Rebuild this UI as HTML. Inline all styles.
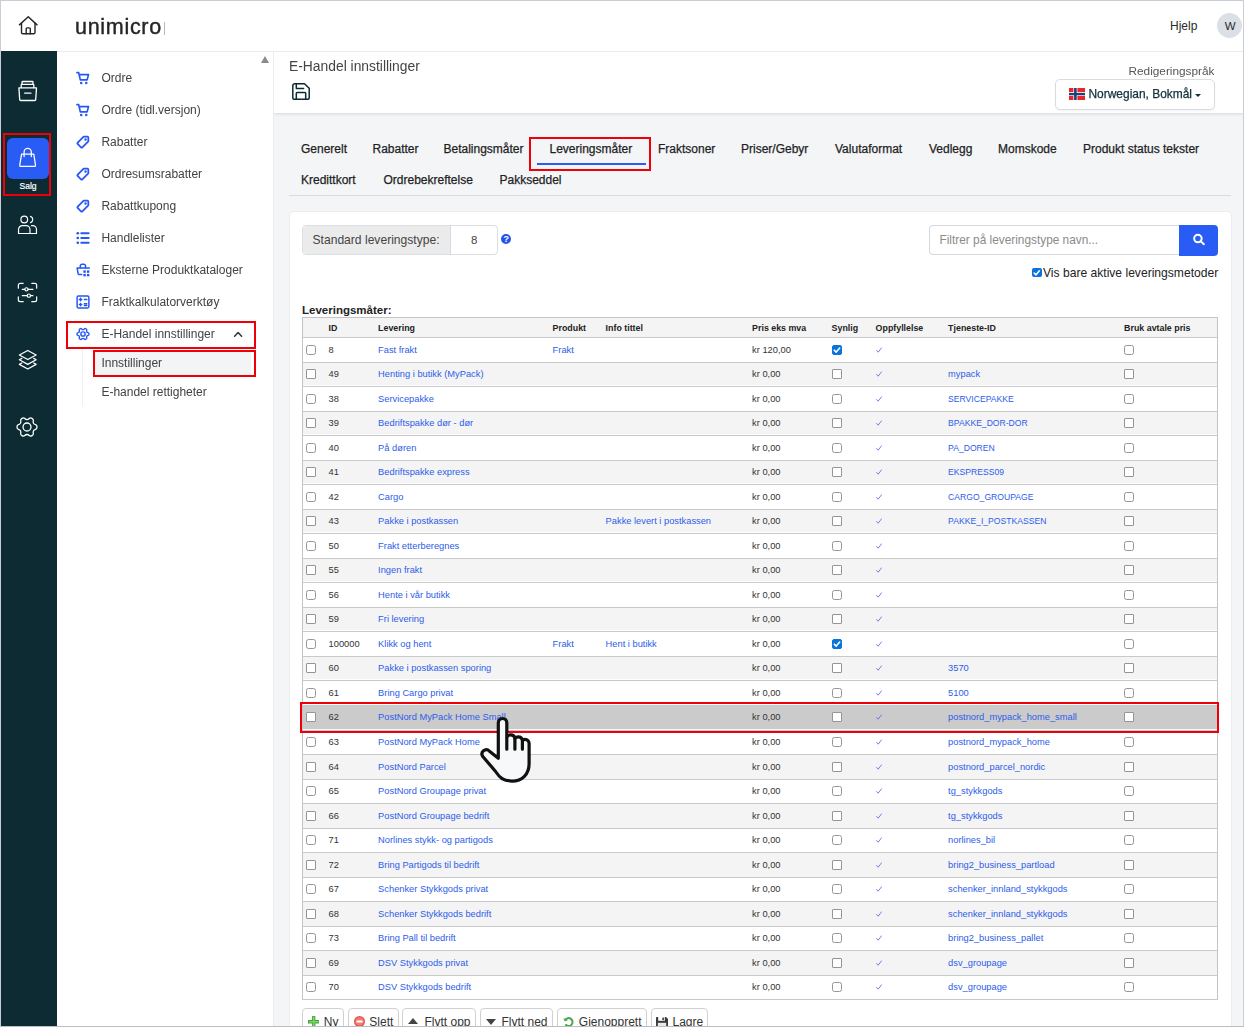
<!DOCTYPE html>
<html lang="no">
<head>
<meta charset="utf-8">
<title>E-Handel innstillinger</title>
<style>
*{box-sizing:border-box;margin:0;padding:0}
html,body{width:1244px;height:1027px;overflow:hidden;background:#fff}
body{font-family:"Liberation Sans",sans-serif;color:#333;position:relative}
.abs{position:absolute}
#frame{position:absolute;left:0;top:0;width:1244px;height:1027px;border:1px solid #c9ced6;border-bottom-color:#b9bcc0;z-index:50;pointer-events:none}
#top{position:absolute;left:1px;top:1px;width:1242px;height:50px;background:#fff}
#topline{position:absolute;left:57px;top:51px;width:1186px;height:1px;background:#ebebed;z-index:40}
#rail{position:absolute;left:1px;top:51px;width:56px;height:976px;background:#0c2b33}
#menu{will-change:transform;position:absolute;left:57px;top:51px;width:217px;height:976px;background:#fff}
#main{position:absolute;left:274px;top:51px;width:970px;height:976px;background:#f4f5f7;overflow:hidden}
#mhead{will-change:transform;position:absolute;left:0;top:0;width:970px;height:62px;background:#fff;box-shadow:0 1px 3px rgba(0,0,0,.12)}
.mi{position:absolute;left:44.400px;font-size:12px;color:#424242;white-space:nowrap;line-height:16px}
.mic{position:absolute;left:18.500px;width:14px;height:14px;margin-top:.5px}
.tab{position:absolute;font-size:12px;color:#1f1f1f;white-space:nowrap;line-height:16px;-webkit-text-stroke:.25px #1f1f1f}
.red{position:absolute;border:2px solid #ee0008}
#card{position:absolute;left:15px;top:160px;width:943px;height:830px;background:#fff;border:1px solid #ebedf0;border-radius:5px}
table{border-collapse:collapse;position:absolute;left:28px;top:266px;width:916px;table-layout:fixed;font-size:9.300px;color:#333}
th,td{height:24.5px;padding:0;text-align:left;white-space:nowrap;overflow:visible;vertical-align:middle}
th{height:20px;font-weight:bold;color:#222;font-size:8.850px}
tr{border-bottom:1px solid #c9c9c9}
tr.hl{background:#cbcbcb !important}
thead tr{background:#f4f4f4}
tbody tr:nth-child(even){background:#f4f4f4}
table{border:1px solid #c4c4c4}
td a,.lk{color:#2d5dea}
tbody tr:nth-child(odd) td{height:25px}
tbody tr:nth-child(even) td{height:24px}
tbody tr:nth-child(n+16):nth-child(even) td{height:25px}
tbody tr:nth-child(n+16):nth-child(odd) td{height:24px}
tbody tr:nth-child(n+16):nth-child(odd) td,tbody tr.hl td,tbody tr:nth-child(-n+15):nth-child(even) td{top:-.6px}
td.c0{padding-left:3.250px}
td.up{font-size:8.600px}
th,td{position:relative;left:-.4px}
.cb{display:inline-block;width:10px;height:10px;border:1px solid #959595;border-radius:2.5px;background:#fff;vertical-align:middle;position:relative;top:-.45px}
.cb.sq{border-radius:1px}
.cb.on{background:#0b74da;border-color:#0b74da;border-radius:2px}
.btn{position:absolute;top:956px;height:30px;border:1px solid #d0d0d0;border-radius:4px;background:#fff;font-size:12px;color:#333;line-height:28px;white-space:nowrap}
</style>
</head>
<body>
<div id="top">
  <svg class="abs" style="left:15.5px;top:12.5px" width="22.5" height="22.5" viewBox="0 0 24 24" fill="none" stroke="#262626" stroke-width="1.5" stroke-linejoin="round" stroke-linecap="round"><path d="M2.6 11.6 12 3l9.4 8.6"/><path d="M4.8 9.8V19.6a1.4 1.4 0 0 0 1.4 1.4h11.6a1.4 1.4 0 0 0 1.4-1.4V9.8"/><path d="M9.8 21v-5.2a1 1 0 0 1 1-1h2.4a1 1 0 0 1 1 1V21"/></svg>
  <div class="abs" id="logo" style="will-change:transform;left:74px;top:10.5px;font-size:21.500px;line-height:30px;color:#262626;letter-spacing:.7px;-webkit-text-stroke:.4px #262626">unimicro</div>
  <div class="abs" style="left:163px;top:21px;width:1px;height:13px;background:#b8b8b8"></div>
  <div class="abs" id="hjelp" style="left:1169px;top:17px;font-size:12px;line-height:16px;color:#2a2a2a">Hjelp</div>
  <div class="abs" style="left:1216px;top:12px;width:25px;height:25px;border-radius:13px;background:#dae0e6;font-size:11.500px;line-height:26.200px;padding-left:1.200px;text-align:center;color:#2a2a2a">W</div>
</div>
<div id="rail">
  <!-- archive -->
  <svg class="abs" style="left:16px;top:29px" width="22" height="22" viewBox="0 0 22 22" fill="none" stroke="#fff" stroke-width="1.3" stroke-linejoin="round" stroke-linecap="round"><path d="M5 4.300V2.100a.6.6 0 0 1 .6-.6h9.800a.6.600 0 0 1 .6.600V4.300"/><path d="M4.200 7.500V4.900a.600.600 0 0 1 .600-.6h11.400a.6.6 0 0 1 .6.600V7.500"/><path d="M1.900 7.900h17.600l-.8 11.700a1 1 0 0 1-1 .900H3.700a1 1 0 0 1-1-.900z"/><path d="M7.600 13.100h6.400"/></svg>
  <!-- active Salg -->
  <div class="abs" style="left:6px;top:87px;width:42px;height:41px;border-radius:6px;background:#295cf4"></div>
  <svg class="abs" style="left:15.600px;top:95px" width="22" height="22" viewBox="0 0 22 22" fill="none" stroke="#fff" stroke-width="1.25" stroke-linejoin="round" stroke-linecap="round"><path d="M4.600 8.200h12.200l1.700 11a1 1 0 0 1-1 1.200H3.700a1 1 0 0 1-1-1.200z"/><path d="M7.100 10.600V6a3.600 3.600 0 0 1 7.200 0v4.600"/></svg>
  <div class="abs" id="salg" style="left:0;top:129px;width:54px;text-align:center;font-size:8.500px;line-height:12px;color:#fff;-webkit-text-stroke:.2px #fff">Salg</div>
  <div class="red" style="left:1.500px;top:82px;width:48.500px;height:63px"></div>
  <!-- users -->
  <svg class="abs" style="left:16px;top:163.200px" width="21" height="21" viewBox="0 0 22 22" fill="none" stroke="#fff" stroke-width="1.25" stroke-linejoin="round" stroke-linecap="round"><circle cx="7.600" cy="5.800" r="3.500"/><path d="M1.600 20.400v-4.200a4 4 0 0 1 4-4h4a4 4 0 0 1 4 4v4.200z"/><path d="M14.200 2.500a3.500 3.500 0 0 1 0 6.600"/><path d="M15.200 12.200h1.200a4 4 0 0 1 4 4v4.200h-6.800"/></svg>
  <!-- frame -->
  <svg class="abs" style="left:16px;top:230.500px" width="21" height="21" viewBox="0 0 22 22" fill="none" stroke="#fff" stroke-width="1.250" stroke-linejoin="round" stroke-linecap="round"><path d="M1.400 6.500V3.400a2 2 0 0 1 2-2h3.100"/><path d="M15.500 1.400h3.100a2 2 0 0 1 2 2v3.100"/><path d="M20.600 15.500v3.100a2 2 0 0 1-2 2h-3.100"/><path d="M6.500 20.600H3.400a2 2 0 0 1-2-2v-3.100"/><path d="M5.500 7.700h2.700M11.700 7.700h5"/><circle cx="9.900" cy="7.700" r="1.700"/><path d="M5.500 14.300h5.200M14.200 14.300h2.500"/><circle cx="12.400" cy="14.300" r="1.700"/></svg>
  <!-- layers -->
  <svg class="abs" style="left:16.200px;top:297.500px" width="21.500" height="21.500" viewBox="0 0 22 22" fill="none" stroke="#fff" stroke-width="1.250" stroke-linejoin="round" stroke-linecap="round"><path d="M11 1.500l8.600 4.600-8.600 4.700-8.600-4.700z"/><path d="M4.900 9.600l-2.500 1.400 8.600 4.700 8.600-4.700-2.500-1.400"/><path d="M4.900 14.300l-2.500 1.400 8.600 4.700 8.600-4.700-2.500-1.400"/></svg>
  <!-- gear -->
  <svg class="abs" style="left:14.450px;top:363.600px" width="24" height="24" viewBox="0 0 24 24" fill="none" stroke="#fff" stroke-width="1.300" stroke-linejoin="round" stroke-linecap="round"><path d="M18.50 8.25Q19.10 9.28 20.55 9.67Q22.01 10.05 22.01 12.00Q22.01 13.95 20.55 14.33Q19.10 14.72 18.50 15.75Q17.91 16.78 18.30 18.24Q18.69 19.70 17.01 20.67Q15.32 21.64 14.25 20.58Q13.19 19.51 12.00 19.51Q10.81 19.51 9.75 20.58Q8.68 21.64 6.99 20.67Q5.31 19.70 5.70 18.24Q6.09 16.78 5.50 15.75Q4.90 14.72 3.45 14.33Q1.99 13.95 1.99 12.00Q1.99 10.05 3.45 9.67Q4.90 9.28 5.50 8.25Q6.09 7.22 5.70 5.76Q5.31 4.30 6.99 3.33Q8.68 2.36 9.75 3.42Q10.81 4.49 12.00 4.49Q13.19 4.49 14.25 3.42Q15.32 2.36 17.01 3.33Q18.69 4.30 18.30 5.76Q17.91 7.22 18.50 8.25z"/><circle cx="12" cy="12" r="4"/></svg>
</div>
<div id="menu">
  <div class="abs" style="left:216px;top:0;width:1px;height:976px;background:#ececec"></div>
  <div class="abs" style="left:25px;top:298px;width:1px;height:57px;background:#efefef"></div>
<div class="abs" style="left:37px;top:301px;width:157px;height:23.500px;background:#f3f4f6;border-radius:2px"></div>
<svg class="abs" style="left:176px;top:278px" width="10" height="10" viewBox="0 0 10 10" fill="none" stroke="#333" stroke-width="1.500" stroke-linecap="round" stroke-linejoin="round"><path d="M1.600 7.300L5.100 3.600l3.500 3.700"/></svg>
<div class="red" style="left:8.799999999999997px;top:270px;width:190.500px;height:27.500px"></div>
<div class="red" style="left:35.7px;top:299.3px;width:163.600px;height:26.500px"></div>
  <div class="abs" style="left:204px;top:5px;width:0;height:0;border-left:4.500px solid transparent;border-right:4.500px solid transparent;border-bottom:7px solid #8b8b8b"></div>
  <svg class="mic" style="top:19.5px" viewBox="0 0 15 15" fill="none" stroke="#2457f5" stroke-width="1.800" stroke-linejoin="round" stroke-linecap="round"><path d="M1 1.700h1.900l1.700 7.800h7.300l1.500-5.600H3.600"/><circle cx="5.600" cy="12.800" r="1.350" fill="#2457f5" stroke="none"/><circle cx="11" cy="12.800" r="1.350" fill="#2457f5" stroke="none"/></svg>
  <div class="mi" style="top:19px">Ordre</div>
  <svg class="mic" style="top:51.5px" viewBox="0 0 15 15" fill="none" stroke="#2457f5" stroke-width="1.800" stroke-linejoin="round" stroke-linecap="round"><path d="M1 1.700h1.900l1.700 7.800h7.300l1.500-5.600H3.600"/><circle cx="5.600" cy="12.800" r="1.350" fill="#2457f5" stroke="none"/><circle cx="11" cy="12.800" r="1.350" fill="#2457f5" stroke="none"/></svg>
  <div class="mi" style="top:51px">Ordre (tidl.versjon)</div>
  <svg class="mic" style="top:83.5px" viewBox="0 0 15 15" fill="none" stroke="#2457f5" stroke-width="1.900" stroke-linejoin="round" stroke-linecap="round"><path d="M8.200 1.800h4a1 1 0 0 1 1 1v4l-6.400 6.400a1 1 0 0 1-1.400 0L1.800 9.600a1 1 0 0 1 0-1.400z"/><circle cx="10.200" cy="4.800" r="1.300" fill="#2457f5" stroke="none"/></svg>
  <div class="mi" style="top:83px">Rabatter</div>
  <svg class="mic" style="top:115.5px" viewBox="0 0 15 15" fill="none" stroke="#2457f5" stroke-width="1.900" stroke-linejoin="round" stroke-linecap="round"><path d="M8.200 1.800h4a1 1 0 0 1 1 1v4l-6.400 6.400a1 1 0 0 1-1.400 0L1.800 9.600a1 1 0 0 1 0-1.400z"/><circle cx="10.200" cy="4.800" r="1.300" fill="#2457f5" stroke="none"/></svg>
  <div class="mi" style="top:115px">Ordresumsrabatter</div>
  <svg class="mic" style="top:147.5px" viewBox="0 0 15 15" fill="none" stroke="#2457f5" stroke-width="1.900" stroke-linejoin="round" stroke-linecap="round"><path d="M8.200 1.800h4a1 1 0 0 1 1 1v4l-6.400 6.400a1 1 0 0 1-1.400 0L1.800 9.600a1 1 0 0 1 0-1.400z"/><circle cx="10.200" cy="4.800" r="1.300" fill="#2457f5" stroke="none"/></svg>
  <div class="mi" style="top:147px">Rabattkupong</div>
  <svg class="mic" style="top:179.5px" viewBox="0 0 15 15" fill="none" stroke="#2457f5" stroke-width="2" stroke-linecap="round"><path d="M5.600 2.400h8M5.600 7.500h8M5.600 12.600h8"/><circle cx="1.900" cy="2.400" r="1.450" fill="#2457f5" stroke="none"/><circle cx="1.900" cy="7.500" r="1.450" fill="#2457f5" stroke="none"/><circle cx="1.900" cy="12.600" r="1.450" fill="#2457f5" stroke="none"/></svg>
  <div class="mi" style="top:179px">Handlelister</div>
  <svg class="mic" style="top:211.5px" viewBox="0 0 15 15" fill="none" stroke="#2457f5" stroke-width="1.650" stroke-linejoin="round" stroke-linecap="round"><path d="M6 12.300H3.300a1 1 0 0 1-1-.8L1.200 5.400h13"/><path d="M4.600 5.200V3.200a1.800 1.800 0 0 1 1.800-1.800h2a1.800 1.800 0 0 1 1.800 1.800v2"/><g fill="#2457f5" stroke="none"><rect x="7.900" y="7.900" width="2.600" height="2.600"/><rect x="11.700" y="7.900" width="2.600" height="2.600"/><rect x="7.900" y="11.700" width="2.600" height="2.600"/><rect x="11.700" y="11.700" width="2.600" height="2.600"/></g></svg>
  <div class="mi" style="top:211px">Eksterne Produktkataloger</div>
  <svg class="mic" style="top:243.5px" viewBox="0 0 15 15" fill="none" stroke="#2457f5" stroke-width="1.600" stroke-linejoin="round" stroke-linecap="round"><rect x="1.200" y="1.200" width="12.600" height="12.600" rx="1.400"/><path d="M3.600 4.800h2.600M4.900 3.500v2.600M9 4.800h2.600M3.600 10.300h2.600M4.900 9v2.600M9 9.500h2.600M9 11.300h2.600"/></svg>
  <div class="mi" style="top:243px">Fraktkalkulatorverktøy</div>
  <svg class="mic" style="top:275.5px" viewBox="0 0 15 15" fill="none" stroke="#2457f5" stroke-width="1.500" stroke-linejoin="round" stroke-linecap="round"><path d="M11.52 5.18Q11.89 5.82 12.93 6.03Q13.98 6.24 13.98 7.50Q13.98 8.76 12.93 8.97Q11.89 9.18 11.52 9.82Q11.15 10.46 11.49 11.47Q11.83 12.48 10.74 13.11Q9.65 13.74 8.94 12.94Q8.24 12.14 7.50 12.14Q6.76 12.14 6.06 12.94Q5.35 13.74 4.26 13.11Q3.17 12.48 3.51 11.47Q3.85 10.46 3.48 9.82Q3.11 9.18 2.07 8.97Q1.02 8.76 1.02 7.50Q1.02 6.24 2.07 6.03Q3.11 5.82 3.48 5.18Q3.85 4.54 3.51 3.53Q3.17 2.52 4.26 1.89Q5.35 1.26 6.06 2.06Q6.76 2.86 7.50 2.86Q8.24 2.86 8.94 2.06Q9.65 1.26 10.74 1.89Q11.83 2.52 11.49 3.53Q11.15 4.54 11.52 5.18z"/><circle cx="7.500" cy="7.500" r="2.300"/></svg>
  <div class="mi" style="top:275px">E-Handel innstillinger</div>
  <div class="mi" style="top:304px">Innstillinger</div>
  <div class="mi" style="top:333px">E-handel rettigheter</div>
</div>
<div id="main">
  <div id="mhead">
    <div class="abs" id="title" style="left:15px;top:6.700px;font-size:13.850px;line-height:16px;color:#444">E-Handel innstillinger</div>
    <svg class="abs" style="left:17px;top:31.050px" width="20" height="19" preserveAspectRatio="none" viewBox="0 0 20 20" fill="none" stroke="#0b2b34" stroke-width="1.500" stroke-linejoin="round" stroke-linecap="round"><path d="M3.800 1.800h9.700l4.700 4.700v9.700a2 2 0 0 1-2 2H3.800a2 2 0 0 1-2-2V3.800a2 2 0 0 1 2-2z"/><path d="M5.300 1.900v5h7.300"/><path d="M5.300 18.100v-6.200a.8.800 0 0 1 .8-.8h7.800a.8.800 0 0 1 .8.800v6.200"/></svg>
    <div class="abs" id="redig" style="left:854.500px;top:12px;font-size:11.800px;line-height:16px;color:#555">Redigeringspråk</div>
    <div class="abs" style="left:781px;top:28px;width:160px;height:31px;border:1px solid #d7dde3;border-radius:5px;background:#fff;box-shadow:0 1px 2px rgba(0,0,0,.06)"></div>
    <svg class="abs" style="left:795px;top:37px" width="16" height="12" viewBox="0 0 16 12"><rect width="16" height="12" fill="#e8262d"/><rect x="4.400" width="4" height="12" fill="#fff"/><rect y="4.200" width="16" height="3.800" fill="#fff"/><rect x="5.100" width="2.600" height="12" fill="#1d3f7a"/><rect y="5" width="16" height="2.300" fill="#1d3f7a"/></svg>
    <div class="abs" id="lang" style="left:814.500px;top:35px;font-size:11.950px;line-height:16px;color:#12303a;-webkit-text-stroke:.25px #12303a">Norwegian, Bokmål</div>
    <div class="abs" style="left:920.500px;top:42.500px;width:0;height:0;border-left:3px solid transparent;border-right:3px solid transparent;border-top:3.500px solid #12303a"></div>
  </div>
  <div class="tab" style="left:27px;top:90px">Generelt</div>
  <div class="tab" style="left:98.5px;top:90px">Rabatter</div>
  <div class="tab" style="left:169.5px;top:90px">Betalingsmåter</div>
  <div class="tab" style="left:275.5px;top:90px">Leveringsmåter</div>
  <div class="tab" style="left:384px;top:90px">Fraktsoner</div>
  <div class="tab" style="left:467px;top:90px">Priser/Gebyr</div>
  <div class="tab" style="left:561px;top:90px">Valutaformat</div>
  <div class="tab" style="left:655px;top:90px">Vedlegg</div>
  <div class="tab" style="left:724px;top:90px">Momskode</div>
  <div class="tab" style="left:809px;top:90px">Produkt status tekster</div>
  <div class="tab" style="left:27px;top:121px">Kredittkort</div>
  <div class="tab" style="left:109.5px;top:121px">Ordrebekreftelse</div>
  <div class="tab" style="left:225.5px;top:121px">Pakkseddel</div>
  <div class="abs" style="left:263px;top:111.500px;width:109px;height:2px;background:#295cf4"></div>
  <div class="red" style="left:254.700px;top:85.700px;width:122.300px;height:34.300px"></div>
  <div class="abs" style="left:15px;top:144px;width:942px;height:1px;background:#d9dcdf"></div>
  <div id="card">
  <div class="abs" style="left:12px;top:13px;width:196px;height:30px;border:1px solid #d9dfe4;border-radius:4px;background:#fff"></div>
  <div class="abs" style="left:13px;top:14px;width:148px;height:28px;background:#ebebeb;border-right:1px solid #d5dadf;border-radius:3px 0 0 3px"></div>
  <div class="abs" id="std" style="left:22.5px;top:20px;font-size:12.100px;line-height:16px;color:#444">Standard leveringstype:</div>
  <div class="abs" style="left:160px;top:20px;width:48.200px;text-align:center;font-size:11.500px;line-height:16px;color:#444">8</div>
  <svg class="abs" style="left:211px;top:21.80000000000001px" width="10" height="10" viewBox="0 0 10 10"><circle cx="5" cy="5" r="5" fill="#2351ee"/><text x="5.100" y="8.400" font-size="9.500" font-weight="bold" font-family="Liberation Sans, sans-serif" text-anchor="middle" fill="#fff">?</text></svg>
  <div class="abs" style="left:639px;top:13px;width:251px;height:30px;border:1px solid #d3d9df;border-right:0;border-radius:4px 0 0 4px;background:#fff"></div>
  <div class="abs" id="ph" style="left:649.5px;top:20px;font-size:11.850px;line-height:16px;color:#8b8b8b">Filtrer på leveringstype navn...</div>
  <div class="abs" style="left:889px;top:13px;width:39px;height:31px;border-radius:0 4px 4px 0;background:#295cf4"></div>
  <svg class="abs" style="left:902px;top:21px" width="13" height="13" viewBox="0 0 13 13" fill="none" stroke="#fff" stroke-width="2" stroke-linecap="round"><circle cx="5.900" cy="5.600" r="3.750"/><path d="M8.700 8.300l3.200 2.900"/></svg>
  <div class="abs" style="left:742px;top:55.5px;width:9.500px;height:9.500px;border-radius:2px;background:#0b74da"></div>
  <svg class="abs" style="left:742px;top:55.5px" width="9.500" height="9.500" viewBox="0 0 10 10" fill="none" stroke="#fff" stroke-width="1.600" stroke-linecap="round" stroke-linejoin="round"><path d="M2.200 5.200l2 2 3.600-4.200"/></svg>
  <div class="abs" id="vis" style="left:753px;top:53px;font-size:12.100px;line-height:16px;color:#222">Vis bare aktive leveringsmetoder</div>
  <div class="abs" id="lm" style="left:12px;top:89.500px;font-size:11.500px;line-height:16px;font-weight:bold;color:#222">Leveringsmåter:</div>
  <table style="left:12px;top:105px">
    <colgroup><col style="width:26.5px"><col style="width:49.5px"><col style="width:174.5px"><col style="width:53.0px"><col style="width:146.5px"><col style="width:79.5px"><col style="width:44.0px"><col style="width:72.5px"><col style="width:176px"><col style="width:93px"></colgroup>
    <thead><tr><th></th><th>ID</th><th>Levering</th><th>Produkt</th><th>Info tittel</th><th>Pris eks mva</th><th>Synlig</th><th>Oppfyllelse</th><th>Tjeneste-ID</th><th>Bruk avtale pris</th></tr></thead>
    <tbody>
    <tr><td class="c0"><span class="cb"></span></td><td>8</td><td class="lk">Fast frakt</td><td class="lk">Frakt</td><td class="lk"></td><td>kr 120,00</td><td><span class="cb on"><svg width="10" height="10" viewBox="0 0 10 10" fill="none" stroke="#fff" stroke-width="1.600" stroke-linecap="round" stroke-linejoin="round" style="position:absolute;left:-1px;top:-1px"><path d="M2.300 5.200l1.900 1.900 3.500-4.100"/></svg></span></td><td><svg width="6.300" height="6.300" viewBox="0 0 7 7" fill="none" stroke="#4f66ee" stroke-width=".9" stroke-linecap="round" stroke-linejoin="round"><path d="M.8 3.900l1.600 1.900L6.200.900"/></svg></td><td class="lk"></td><td><span class="cb"></span></td></tr>
    <tr><td class="c0"><span class="cb sq"></span></td><td>49</td><td class="lk">Henting i butikk (MyPack)</td><td class="lk"></td><td class="lk"></td><td>kr 0,00</td><td><span class="cb sq"></span></td><td><svg width="6.300" height="6.300" viewBox="0 0 7 7" fill="none" stroke="#4f66ee" stroke-width=".9" stroke-linecap="round" stroke-linejoin="round"><path d="M.8 3.900l1.600 1.900L6.200.900"/></svg></td><td class="lk">mypack</td><td><span class="cb sq"></span></td></tr>
    <tr><td class="c0"><span class="cb"></span></td><td>38</td><td class="lk">Servicepakke</td><td class="lk"></td><td class="lk"></td><td>kr 0,00</td><td><span class="cb"></span></td><td><svg width="6.300" height="6.300" viewBox="0 0 7 7" fill="none" stroke="#4f66ee" stroke-width=".9" stroke-linecap="round" stroke-linejoin="round"><path d="M.8 3.900l1.600 1.900L6.200.900"/></svg></td><td class="lk up">SERVICEPAKKE</td><td><span class="cb"></span></td></tr>
    <tr><td class="c0"><span class="cb sq"></span></td><td>39</td><td class="lk">Bedriftspakke dør - dør</td><td class="lk"></td><td class="lk"></td><td>kr 0,00</td><td><span class="cb sq"></span></td><td><svg width="6.300" height="6.300" viewBox="0 0 7 7" fill="none" stroke="#4f66ee" stroke-width=".9" stroke-linecap="round" stroke-linejoin="round"><path d="M.8 3.900l1.600 1.900L6.200.900"/></svg></td><td class="lk up">BPAKKE_DOR-DOR</td><td><span class="cb sq"></span></td></tr>
    <tr><td class="c0"><span class="cb"></span></td><td>40</td><td class="lk">På døren</td><td class="lk"></td><td class="lk"></td><td>kr 0,00</td><td><span class="cb"></span></td><td><svg width="6.300" height="6.300" viewBox="0 0 7 7" fill="none" stroke="#4f66ee" stroke-width=".9" stroke-linecap="round" stroke-linejoin="round"><path d="M.8 3.900l1.600 1.900L6.200.900"/></svg></td><td class="lk up">PA_DOREN</td><td><span class="cb"></span></td></tr>
    <tr><td class="c0"><span class="cb sq"></span></td><td>41</td><td class="lk">Bedriftspakke express</td><td class="lk"></td><td class="lk"></td><td>kr 0,00</td><td><span class="cb sq"></span></td><td><svg width="6.300" height="6.300" viewBox="0 0 7 7" fill="none" stroke="#4f66ee" stroke-width=".9" stroke-linecap="round" stroke-linejoin="round"><path d="M.8 3.900l1.600 1.900L6.200.900"/></svg></td><td class="lk up">EKSPRESS09</td><td><span class="cb sq"></span></td></tr>
    <tr><td class="c0"><span class="cb"></span></td><td>42</td><td class="lk">Cargo</td><td class="lk"></td><td class="lk"></td><td>kr 0,00</td><td><span class="cb"></span></td><td><svg width="6.300" height="6.300" viewBox="0 0 7 7" fill="none" stroke="#4f66ee" stroke-width=".9" stroke-linecap="round" stroke-linejoin="round"><path d="M.8 3.900l1.600 1.900L6.200.900"/></svg></td><td class="lk up">CARGO_GROUPAGE</td><td><span class="cb"></span></td></tr>
    <tr><td class="c0"><span class="cb sq"></span></td><td>43</td><td class="lk">Pakke i postkassen</td><td class="lk"></td><td class="lk">Pakke levert i postkassen</td><td>kr 0,00</td><td><span class="cb sq"></span></td><td><svg width="6.300" height="6.300" viewBox="0 0 7 7" fill="none" stroke="#4f66ee" stroke-width=".9" stroke-linecap="round" stroke-linejoin="round"><path d="M.8 3.900l1.600 1.900L6.200.900"/></svg></td><td class="lk up">PAKKE_I_POSTKASSEN</td><td><span class="cb sq"></span></td></tr>
    <tr><td class="c0"><span class="cb"></span></td><td>50</td><td class="lk">Frakt etterberegnes</td><td class="lk"></td><td class="lk"></td><td>kr 0,00</td><td><span class="cb"></span></td><td><svg width="6.300" height="6.300" viewBox="0 0 7 7" fill="none" stroke="#4f66ee" stroke-width=".9" stroke-linecap="round" stroke-linejoin="round"><path d="M.8 3.900l1.600 1.900L6.200.900"/></svg></td><td class="lk"></td><td><span class="cb"></span></td></tr>
    <tr><td class="c0"><span class="cb sq"></span></td><td>55</td><td class="lk">Ingen frakt</td><td class="lk"></td><td class="lk"></td><td>kr 0,00</td><td><span class="cb sq"></span></td><td><svg width="6.300" height="6.300" viewBox="0 0 7 7" fill="none" stroke="#4f66ee" stroke-width=".9" stroke-linecap="round" stroke-linejoin="round"><path d="M.8 3.900l1.600 1.900L6.200.900"/></svg></td><td class="lk"></td><td><span class="cb sq"></span></td></tr>
    <tr><td class="c0"><span class="cb"></span></td><td>56</td><td class="lk">Hente i vår butikk</td><td class="lk"></td><td class="lk"></td><td>kr 0,00</td><td><span class="cb"></span></td><td><svg width="6.300" height="6.300" viewBox="0 0 7 7" fill="none" stroke="#4f66ee" stroke-width=".9" stroke-linecap="round" stroke-linejoin="round"><path d="M.8 3.900l1.600 1.900L6.200.900"/></svg></td><td class="lk"></td><td><span class="cb"></span></td></tr>
    <tr><td class="c0"><span class="cb sq"></span></td><td>59</td><td class="lk">Fri levering</td><td class="lk"></td><td class="lk"></td><td>kr 0,00</td><td><span class="cb sq"></span></td><td><svg width="6.300" height="6.300" viewBox="0 0 7 7" fill="none" stroke="#4f66ee" stroke-width=".9" stroke-linecap="round" stroke-linejoin="round"><path d="M.8 3.900l1.600 1.900L6.200.900"/></svg></td><td class="lk"></td><td><span class="cb sq"></span></td></tr>
    <tr><td class="c0"><span class="cb"></span></td><td>100000</td><td class="lk">Klikk og hent</td><td class="lk">Frakt</td><td class="lk">Hent i butikk</td><td>kr 0,00</td><td><span class="cb on"><svg width="10" height="10" viewBox="0 0 10 10" fill="none" stroke="#fff" stroke-width="1.600" stroke-linecap="round" stroke-linejoin="round" style="position:absolute;left:-1px;top:-1px"><path d="M2.300 5.200l1.900 1.900 3.500-4.100"/></svg></span></td><td><svg width="6.300" height="6.300" viewBox="0 0 7 7" fill="none" stroke="#4f66ee" stroke-width=".9" stroke-linecap="round" stroke-linejoin="round"><path d="M.8 3.900l1.600 1.900L6.200.900"/></svg></td><td class="lk"></td><td><span class="cb"></span></td></tr>
    <tr><td class="c0"><span class="cb sq"></span></td><td>60</td><td class="lk">Pakke i postkassen sporing</td><td class="lk"></td><td class="lk"></td><td>kr 0,00</td><td><span class="cb sq"></span></td><td><svg width="6.300" height="6.300" viewBox="0 0 7 7" fill="none" stroke="#4f66ee" stroke-width=".9" stroke-linecap="round" stroke-linejoin="round"><path d="M.8 3.900l1.600 1.900L6.200.900"/></svg></td><td class="lk">3570</td><td><span class="cb sq"></span></td></tr>
    <tr><td class="c0"><span class="cb"></span></td><td>61</td><td class="lk">Bring Cargo privat</td><td class="lk"></td><td class="lk"></td><td>kr 0,00</td><td><span class="cb"></span></td><td><svg width="6.300" height="6.300" viewBox="0 0 7 7" fill="none" stroke="#4f66ee" stroke-width=".9" stroke-linecap="round" stroke-linejoin="round"><path d="M.8 3.900l1.600 1.900L6.200.900"/></svg></td><td class="lk">5100</td><td><span class="cb"></span></td></tr>
    <tr class="hl"><td class="c0"><span class="cb sq"></span></td><td>62</td><td class="lk">PostNord MyPack Home Small</td><td class="lk"></td><td class="lk"></td><td>kr 0,00</td><td><span class="cb sq"></span></td><td><svg width="6.300" height="6.300" viewBox="0 0 7 7" fill="none" stroke="#4f66ee" stroke-width=".9" stroke-linecap="round" stroke-linejoin="round"><path d="M.8 3.900l1.600 1.900L6.200.900"/></svg></td><td class="lk">postnord_mypack_home_small</td><td><span class="cb sq"></span></td></tr>
    <tr><td class="c0"><span class="cb"></span></td><td>63</td><td class="lk">PostNord MyPack Home</td><td class="lk"></td><td class="lk"></td><td>kr 0,00</td><td><span class="cb"></span></td><td><svg width="6.300" height="6.300" viewBox="0 0 7 7" fill="none" stroke="#4f66ee" stroke-width=".9" stroke-linecap="round" stroke-linejoin="round"><path d="M.8 3.900l1.600 1.900L6.200.900"/></svg></td><td class="lk">postnord_mypack_home</td><td><span class="cb"></span></td></tr>
    <tr><td class="c0"><span class="cb sq"></span></td><td>64</td><td class="lk">PostNord Parcel</td><td class="lk"></td><td class="lk"></td><td>kr 0,00</td><td><span class="cb sq"></span></td><td><svg width="6.300" height="6.300" viewBox="0 0 7 7" fill="none" stroke="#4f66ee" stroke-width=".9" stroke-linecap="round" stroke-linejoin="round"><path d="M.8 3.900l1.600 1.900L6.200.900"/></svg></td><td class="lk">postnord_parcel_nordic</td><td><span class="cb sq"></span></td></tr>
    <tr><td class="c0"><span class="cb"></span></td><td>65</td><td class="lk">PostNord Groupage privat</td><td class="lk"></td><td class="lk"></td><td>kr 0,00</td><td><span class="cb"></span></td><td><svg width="6.300" height="6.300" viewBox="0 0 7 7" fill="none" stroke="#4f66ee" stroke-width=".9" stroke-linecap="round" stroke-linejoin="round"><path d="M.8 3.900l1.600 1.900L6.200.900"/></svg></td><td class="lk">tg_stykkgods</td><td><span class="cb"></span></td></tr>
    <tr><td class="c0"><span class="cb sq"></span></td><td>66</td><td class="lk">PostNord Groupage bedrift</td><td class="lk"></td><td class="lk"></td><td>kr 0,00</td><td><span class="cb sq"></span></td><td><svg width="6.300" height="6.300" viewBox="0 0 7 7" fill="none" stroke="#4f66ee" stroke-width=".9" stroke-linecap="round" stroke-linejoin="round"><path d="M.8 3.900l1.600 1.900L6.200.900"/></svg></td><td class="lk">tg_stykkgods</td><td><span class="cb sq"></span></td></tr>
    <tr><td class="c0"><span class="cb"></span></td><td>71</td><td class="lk">Norlines stykk- og partigods</td><td class="lk"></td><td class="lk"></td><td>kr 0,00</td><td><span class="cb"></span></td><td><svg width="6.300" height="6.300" viewBox="0 0 7 7" fill="none" stroke="#4f66ee" stroke-width=".9" stroke-linecap="round" stroke-linejoin="round"><path d="M.8 3.900l1.600 1.900L6.200.900"/></svg></td><td class="lk">norlines_bil</td><td><span class="cb"></span></td></tr>
    <tr><td class="c0"><span class="cb sq"></span></td><td>72</td><td class="lk">Bring Partigods til bedrift</td><td class="lk"></td><td class="lk"></td><td>kr 0,00</td><td><span class="cb sq"></span></td><td><svg width="6.300" height="6.300" viewBox="0 0 7 7" fill="none" stroke="#4f66ee" stroke-width=".9" stroke-linecap="round" stroke-linejoin="round"><path d="M.8 3.900l1.600 1.900L6.200.900"/></svg></td><td class="lk">bring2_business_partload</td><td><span class="cb sq"></span></td></tr>
    <tr><td class="c0"><span class="cb"></span></td><td>67</td><td class="lk">Schenker Stykkgods privat</td><td class="lk"></td><td class="lk"></td><td>kr 0,00</td><td><span class="cb"></span></td><td><svg width="6.300" height="6.300" viewBox="0 0 7 7" fill="none" stroke="#4f66ee" stroke-width=".9" stroke-linecap="round" stroke-linejoin="round"><path d="M.8 3.900l1.600 1.900L6.200.900"/></svg></td><td class="lk">schenker_innland_stykkgods</td><td><span class="cb"></span></td></tr>
    <tr><td class="c0"><span class="cb sq"></span></td><td>68</td><td class="lk">Schenker Stykkgods bedrift</td><td class="lk"></td><td class="lk"></td><td>kr 0,00</td><td><span class="cb sq"></span></td><td><svg width="6.300" height="6.300" viewBox="0 0 7 7" fill="none" stroke="#4f66ee" stroke-width=".9" stroke-linecap="round" stroke-linejoin="round"><path d="M.8 3.900l1.600 1.900L6.200.900"/></svg></td><td class="lk">schenker_innland_stykkgods</td><td><span class="cb sq"></span></td></tr>
    <tr><td class="c0"><span class="cb"></span></td><td>73</td><td class="lk">Bring Pall til bedrift</td><td class="lk"></td><td class="lk"></td><td>kr 0,00</td><td><span class="cb"></span></td><td><svg width="6.300" height="6.300" viewBox="0 0 7 7" fill="none" stroke="#4f66ee" stroke-width=".9" stroke-linecap="round" stroke-linejoin="round"><path d="M.8 3.900l1.600 1.900L6.200.900"/></svg></td><td class="lk">bring2_business_pallet</td><td><span class="cb"></span></td></tr>
    <tr><td class="c0"><span class="cb sq"></span></td><td>69</td><td class="lk">DSV Stykkgods privat</td><td class="lk"></td><td class="lk"></td><td>kr 0,00</td><td><span class="cb sq"></span></td><td><svg width="6.300" height="6.300" viewBox="0 0 7 7" fill="none" stroke="#4f66ee" stroke-width=".9" stroke-linecap="round" stroke-linejoin="round"><path d="M.8 3.900l1.600 1.900L6.200.900"/></svg></td><td class="lk">dsv_groupage</td><td><span class="cb sq"></span></td></tr>
    <tr><td class="c0"><span class="cb"></span></td><td>70</td><td class="lk">DSV Stykkgods bedrift</td><td class="lk"></td><td class="lk"></td><td>kr 0,00</td><td><span class="cb"></span></td><td><svg width="6.300" height="6.300" viewBox="0 0 7 7" fill="none" stroke="#4f66ee" stroke-width=".9" stroke-linecap="round" stroke-linejoin="round"><path d="M.8 3.900l1.600 1.900L6.200.900"/></svg></td><td class="lk">dsv_groupage</td><td><span class="cb"></span></td></tr>
    </tbody>
  </table>
  <div class="btn" style="left:12px;top:796px;width:42px"><svg class="abs" style="left:4.5px;top:6.500px" width="11.500" height="11.500" viewBox="0 0 12 12"><path d="M4.300 0h3.400v4.300H12v3.400H7.700V12H4.300V7.700H0V4.300h4.300z" fill="#3aa63a"/><path d="M5.200.9h1.600v4.300h4.300v1.600H6.800v4.300H5.200V6.800H.9V5.200h4.300z" fill="#7fd35f"/></svg><span class="abs" style="left:20.8px;top:4.500px;line-height:16px">Ny</span></div>
  <div class="btn" style="left:58px;top:796px;width:51px"><svg class="abs" style="left:4.5px;top:7px" width="11" height="11" viewBox="0 0 11 11"><circle cx="5.500" cy="5.500" r="5.500" fill="#e4534d"/><circle cx="5.500" cy="5.500" r="4.300" fill="#ef7b74"/><rect x="2.400" y="4.400" width="6.200" height="2.200" rx=".5" fill="#fff"/></svg><span class="abs" style="left:20.3px;top:4.500px;line-height:16px">Slett</span></div>
  <div class="btn" style="left:112px;top:796px;width:74px"><div class="abs" style="left:4.5px;top:9px;width:0;height:0;border-left:5.500px solid transparent;border-right:5.500px solid transparent;border-bottom:6px solid #444"></div><span class="abs" style="left:21.5px;top:4.500px;line-height:16px">Flytt opp</span></div>
  <div class="btn" style="left:190px;top:796px;width:73px"><div class="abs" style="left:4.5px;top:9.500px;width:0;height:0;border-left:5.500px solid transparent;border-right:5.500px solid transparent;border-top:6px solid #444"></div><span class="abs" style="left:20.5px;top:4.500px;line-height:16px">Flytt ned</span></div>
  <div class="btn" style="left:267px;top:796px;width:90px"><svg class="abs" style="left:5px;top:7px" width="11" height="11" viewBox="0 0 11 11" fill="none" stroke="#4aa84a" stroke-width="2" stroke-linecap="butt"><path d="M2.300 8.400A4 4 0 1 0 2 4.200"/><path d="M.3 2.200l1.500 3.300 3.200-1.400z" fill="#4aa84a" stroke="none"/></svg><span class="abs" style="left:20.8px;top:4.500px;line-height:16px">Gjenopprett</span></div>
  <div class="btn" style="left:360.600px;top:796px;width:57px"><svg class="abs" style="left:4.9px;top:7.500px" width="12" height="11" viewBox="0 0 12 11"><path d="M0 .8A.8.800 0 0 1 .8 0h9.200L12 2v8.200a.8.800 0 0 1-.8.800H.8a.800.800 0 0 1-.8-.8z" fill="#3b3b3b"/><rect x="2.200" y="0" width="6.600" height="3.800" fill="#fff"/><rect x="6.300" y=".6" width="1.600" height="2.600" fill="#3b3b3b"/><rect x="1.800" y="5.800" width="8.400" height="5.200" fill="#e9e9e9"/></svg><span class="abs" style="left:20.9px;top:4.500px;line-height:16px">Lagre</span></div>
  <div class="red" style="left:10px;top:490px;width:919px;height:31px;border-width:2.500px"></div>
  <svg class="abs" style="left:189.500px;top:503.200px;z-index:5" width="56" height="71.500" preserveAspectRatio="none" viewBox="0 0 56 72"><path d="M22.500 3.500c2.500 0 4.300 1.900 4.300 4.300v14.600c.7-1.400 2.100-2.300 3.800-2.300 2.200 0 4 1.500 4.300 3.600.7-1 1.900-1.700 3.300-1.700 2.200 0 3.900 1.500 4.200 3.600.6-.7 1.500-1.100 2.600-1.100 2.400 0 4.100 1.800 4.100 4.200v20.400c0 10.400-6.800 17.400-17.100 17.400-8.300 0-12.400-3.300-16.800-10.100L2.800 41.800c-1.300-2-1-4.300.7-5.700 1.800-1.500 4.300-1.300 6 .3l8.800 7.100V7.800c0-2.400 1.800-4.300 4.200-4.300z" fill="#f7f8fa" stroke="#111" stroke-width="3.200" stroke-linejoin="round"/><path d="M26.800 23.500v11M34.900 24.500v10M42.400 26.500v8" stroke="#111" stroke-width="3.200" stroke-linecap="round"/></svg>
</div>
</div>
<div id="topline"></div>
<div id="frame"></div>
</body>
</html>
